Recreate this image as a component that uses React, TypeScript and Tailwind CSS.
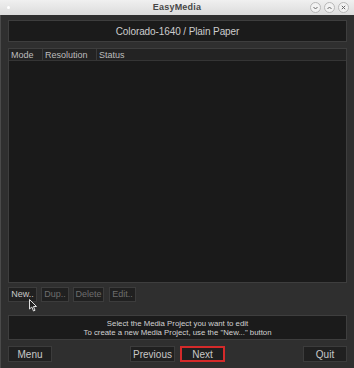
import React from "react";

const Btn = ({
  label,
  w,
  disabled,
  highlight,
  className = "",
}: {
  label: string;
  w: string;
  disabled?: boolean;
  highlight?: boolean;
  className?: string;
}) => (
  <div
    className={`${w} ${className} flex items-center justify-center bg-[#202020] border ${
      highlight ? "border-[#d42a2a] border-2" : "border-[#3c3c3c]"
    } ${disabled ? "text-[#6e6e6e]" : "text-[#c8c8c8]"}`}
  >
    {label}
  </div>
);

const TitleCircle = ({ children }: { children: React.ReactNode }) => (
  <div className="w-[11px] h-[11px] rounded-full border border-[#b8b8b8] bg-[#f2f2f2] flex items-center justify-center">
    {children}
  </div>
);

const App = () => {
  return (
    <div
      className="w-[354px] h-[368px] bg-[#2f2f2f] flex flex-col relative overflow-hidden"
      style={{ fontFamily: '"Liberation Sans", Arial, sans-serif' }}
    >
      {/* title bar */}
      <div className="h-[15px] bg-gradient-to-b from-[#f0f0f0] to-[#dcdcdc] relative flex items-center justify-center">
        <div className="absolute left-[7px] top-[6px] w-[3px] h-[3px] rounded-full bg-white" />
        <span className="text-[9px] font-bold text-[#474747] tracking-[0.2px]">EasyMedia</span>
        <div className="absolute right-[5px] top-[2px] flex gap-[3px]">
          <TitleCircle>
            <svg width="5" height="4" viewBox="0 0 5 4">
              <path d="M0.5 1 L2.5 3 L4.5 1" stroke="#666" strokeWidth="1" fill="none" />
            </svg>
          </TitleCircle>
          <TitleCircle>
            <svg width="5" height="4" viewBox="0 0 5 4">
              <path d="M0.5 3 L2.5 1 L4.5 3" stroke="#666" strokeWidth="1" fill="none" />
            </svg>
          </TitleCircle>
          <TitleCircle>
            <svg width="5" height="5" viewBox="0 0 5 5">
              <path d="M0.8 0.8 L4.2 4.2 M4.2 0.8 L0.8 4.2" stroke="#666" strokeWidth="1" fill="none" />
            </svg>
          </TitleCircle>
        </div>
      </div>

      {/* body */}
      <div className="flex-1 flex flex-col px-[7px] pt-[5px] border-l border-[#4a4a4a]">
        <div className="h-[22px] bg-[#1b1b1b] border border-[#3e3e3e] flex items-center justify-center text-[10px] tracking-[-0.1px] text-[#cdcdcd]">
          Colorado-1640 / Plain Paper
        </div>

        <div className="mt-[6px] h-[235px] bg-[#1a1a1a] border border-[#3e3e3e] flex flex-col">
          <div className="h-[12px] bg-[#232323] border-b border-[#353535] flex text-[9px] text-[#bdbdbd] leading-[12px]">
            <div className="w-[34px] pl-[2px] border-r border-[#3a3a3a]">Mode</div>
            <div className="w-[54px] pl-[2px] border-r border-[#3a3a3a]">Resolution</div>
            <div className="flex-1 pl-[2px]">Status</div>
          </div>
        </div>

        <div className="mt-[4px] h-[15px] flex text-[9px]">
          <Btn label="New.." w="w-[29px]" />
          <Btn label="Dup.." w="w-[28px]" disabled className="ml-[4px]" />
          <Btn label="Delete" w="w-[31px]" disabled className="ml-[4px]" />
          <Btn label="Edit.." w="w-[27px]" disabled className="ml-[5px]" />
        </div>

        <div className="mt-[13px] h-[25px] bg-[#1b1b1b] border border-[#3e3e3e] flex flex-col items-center justify-center text-[7.8px] leading-[9px] text-[#d2d2d2]">
          <div>Select the Media Project you want to edit</div>
          <div>To create a new Media Project, use the "New..." button</div>
        </div>

        <div className="mt-[6px] h-[16px] flex text-[10px]">
          <Btn label="Menu" w="w-[44px]" />
          <div className="flex-1" />
          <Btn label="Previous" w="w-[45px]" />
          <Btn label="Next" w="w-[45px]" highlight className="ml-[5px]" />
          <div className="flex-1" />
          <Btn label="Quit" w="w-[44px]" />
        </div>
      </div>

      {/* mouse pointer */}
      <svg className="absolute left-[29px] top-[299px]" width="9" height="13" viewBox="0 0 9 13">
        <path d="M0.5 0.5 L0.5 10 L2.8 8 L4.5 12 L6 11.3 L4.4 7.5 L7.5 7.5 Z" fill="#222" stroke="#e0e0e0" strokeWidth="1" />
      </svg>
    </div>
  );
};

export default App;
